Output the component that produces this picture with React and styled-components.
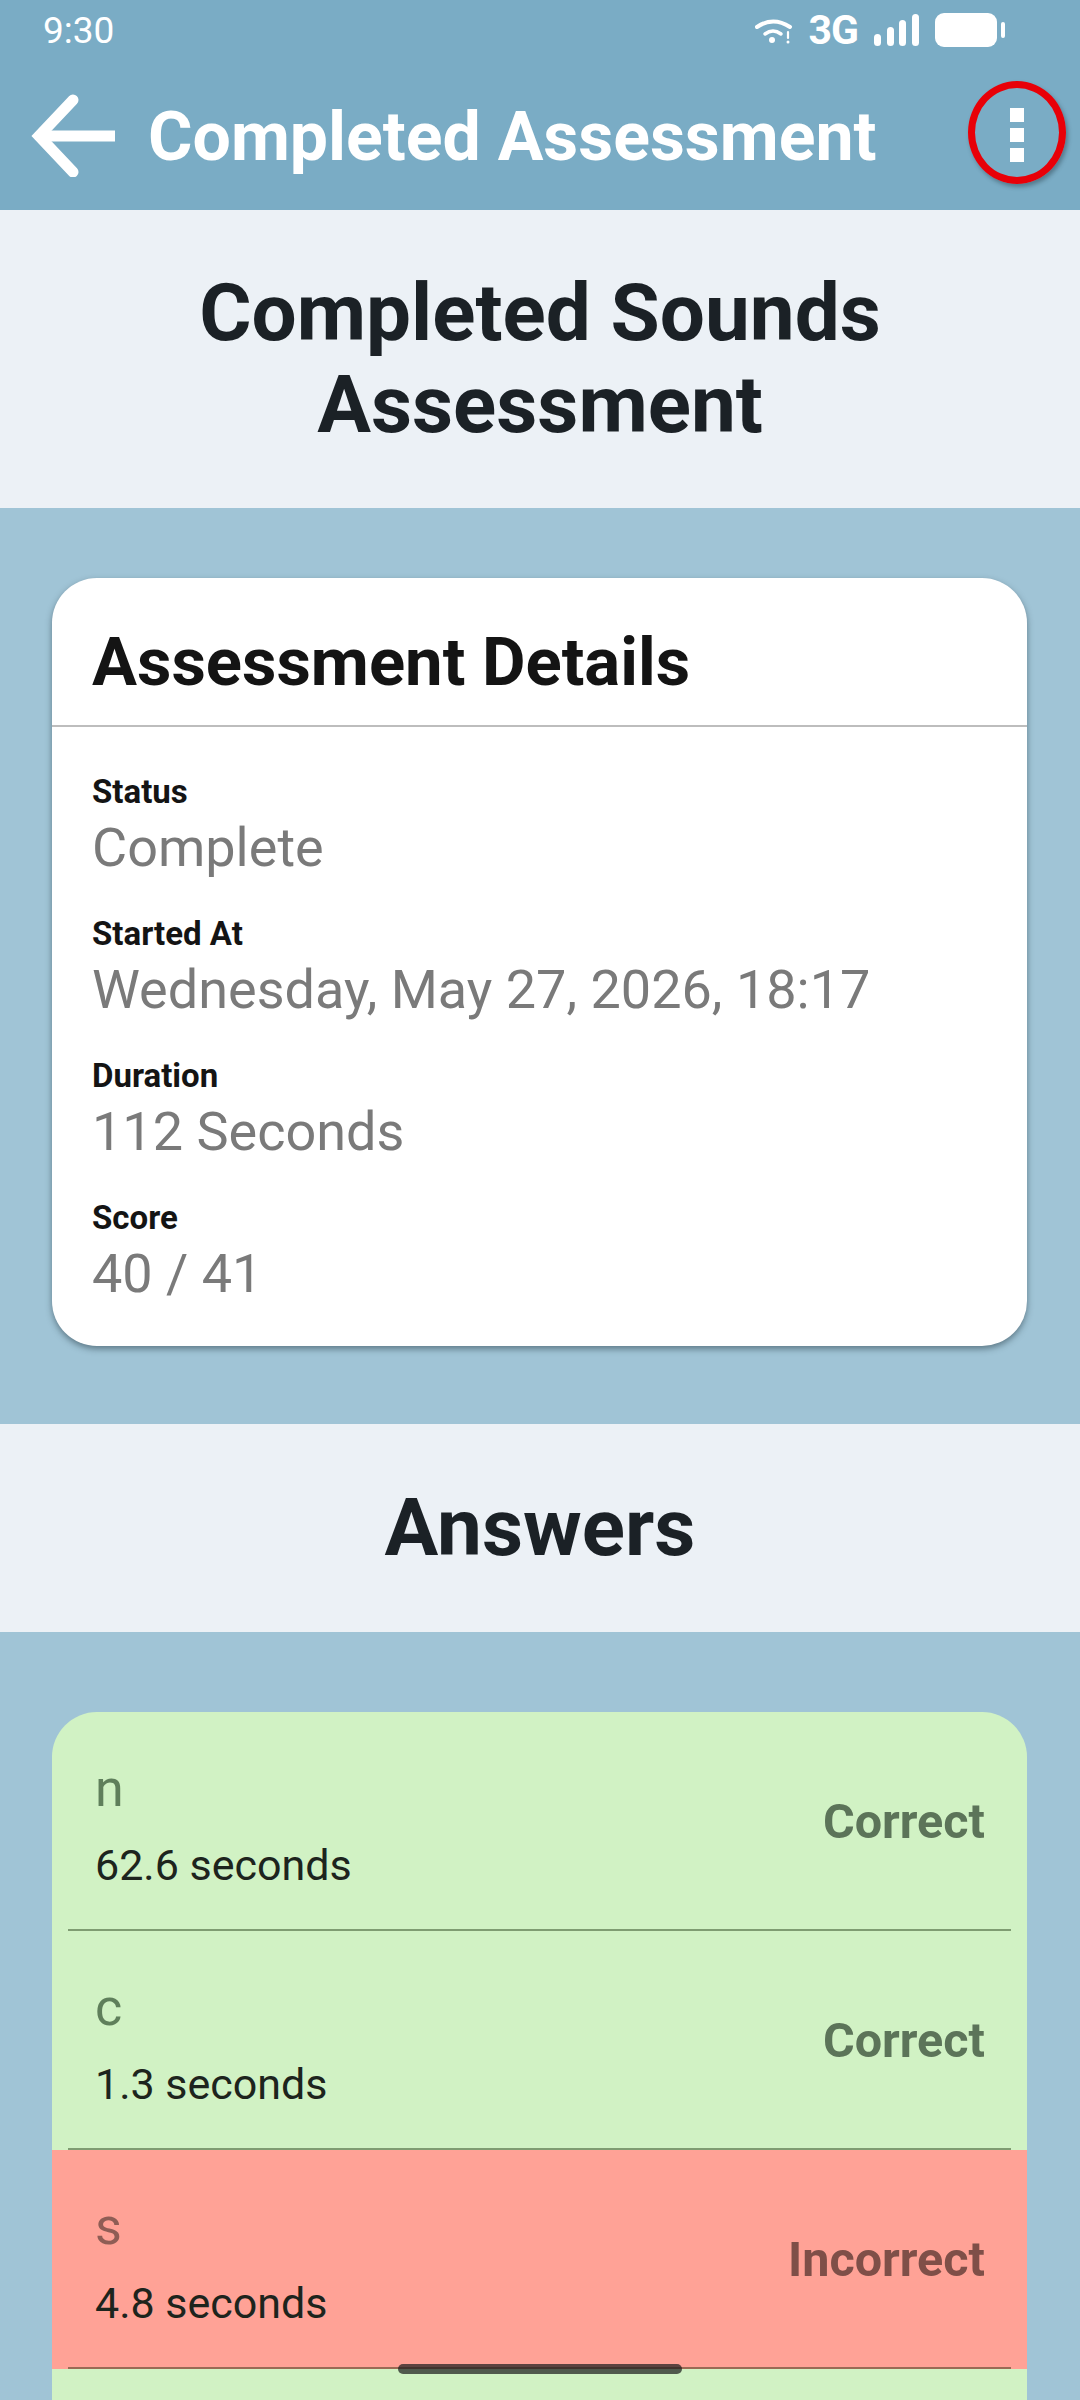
import React from 'react';
import styled, { createGlobalStyle } from 'styled-components';

const GlobalStyle = createGlobalStyle`
  html, body {
    margin: 0;
    padding: 0;
    background: #a0c4d6;
  }
  * {
    box-sizing: border-box;
  }
`;

const Page = styled.div`
  position: relative;
  width: 1080px;
  height: 2400px;
  overflow: hidden;
  display: flex;
  flex-direction: column;
  background: #a0c4d6;
  font-family: Roboto, "Liberation Sans", sans-serif;
`;

const Header = styled.header`
  position: relative;
  height: 210px;
  flex-shrink: 0;
  background: #7aacc5;
  color: #fff;
`;

const StatusBar = styled.div`
  height: 60px;
  padding: 0 75px 0 43px;
  display: flex;
  align-items: center;
  justify-content: space-between;
`;

const Clock = styled.span`
  font-size: 37px;
  font-weight: 400;
`;

const StatusIcons = styled.div`
  display: flex;
  align-items: center;
  gap: 16px;
`;

const Network = styled.span`
  font-size: 41px;
  font-weight: 700;
  line-height: 1;
  letter-spacing: -1px;
`;

const AppBar = styled.div`
  height: 150px;
  padding: 0 56px 0 31px;
  display: flex;
  align-items: center;
`;

const Title = styled.h1`
  margin: 4px 0 0 33px;
  flex: 1;
  font-size: 68px;
  font-weight: 700;
  line-height: 1;
  white-space: nowrap;
`;

const Kebab = styled.div`
  width: 14px;
  display: flex;
  flex-direction: column;
  gap: 6px;

  span {
    height: 14px;
    background: #fff;
  }
`;

const Highlight = styled.div`
  position: absolute;
  left: 968px;
  top: 81px;
  width: 98px;
  height: 103px;
  border: 7px solid #e80008;
  border-radius: 50%;
  box-shadow: 2px 3px 4px rgba(40, 60, 70, 0.45);
`;

const Banner = styled.section`
  height: ${p => p.$height}px;
  flex-shrink: 0;
  background: #ecf1f6;
  display: flex;
  align-items: center;
  justify-content: center;
`;

const Heading = styled.h2`
  margin: 0;
  color: #1b2126;
  font-size: 80px;
  font-weight: 700;
  line-height: 92px;
  text-align: center;
`;

const Band = styled.div`
  flex-shrink: 0;
  padding: ${p => p.$top}px 53px ${p => p.$bottom}px 52px;
`;

const Card = styled.div`
  background: #fff;
  border-radius: 45px;
  box-shadow: 0 3px 6px rgba(30, 50, 60, 0.5);
  overflow: hidden;
`;

const CardTitle = styled.h3`
  margin: 0;
  height: 149px;
  padding: 20px 40px 0;
  display: flex;
  align-items: center;
  color: #141414;
  font-size: 67px;
  font-weight: 700;
  border-bottom: 2px solid #bdbdbd;
`;

const Details = styled.div`
  height: 619px;
  padding: 43px 40px 0;
`;

const Detail = styled.div`
  height: 142px;
`;

const Label = styled.div`
  height: 44px;
  color: #141414;
  font-size: 33px;
  font-weight: 700;
  line-height: 44px;
`;

const Value = styled.div`
  color: #7a7a7a;
  font-size: 54px;
  font-weight: 400;
  line-height: 68px;
`;

const AnswerCard = styled.div`
  border-radius: 45px 45px 0 0;
  overflow: hidden;
`;

const Row = styled.div`
  height: ${p => p.$height}px;
  background: ${p => (p.$wrong ? '#ffa296' : '#d1f2c4')};
  display: flex;
  flex-direction: column;
`;

const RowBody = styled.div`
  flex: 1;
  padding: 0 42px 0 43px;
  display: flex;
  align-items: center;
  justify-content: space-between;
`;

const RowText = styled.div`
  padding-top: 8px;
`;

const Sound = styled.div`
  color: ${p => (p.$wrong ? '#8f5d55' : '#5f7f5b')};
  font-size: 52px;
  line-height: 56px;
  margin-bottom: 24px;
`;

const Time = styled.div`
  color: #1d241d;
  font-size: 43px;
  line-height: 48px;
`;

const Verdict = styled.div`
  padding-top: 2px;
  color: ${p => (p.$wrong ? '#7f4f48' : '#5c7459')};
  font-size: 48.5px;
  font-weight: 700;
`;

const Divider = styled.div`
  height: 2px;
  margin: 0 16px;
  background: ${p => (p.$wrong ? '#9a6a55' : '#7f9c72')};
`;

const HomeBar = styled.div`
  position: absolute;
  left: 398px;
  top: 2364px;
  width: 284px;
  height: 10px;
  border-radius: 5px;
  background: rgba(30, 30, 30, 0.72);
`;

const details = [
  ['Status', 'Complete'],
  ['Started At', 'Wednesday, May 27, 2026, 18:17'],
  ['Duration', '112 Seconds'],
  ['Score', '40 / 41'],
];

const answers = [
  { sound: 'n', time: '62.6 seconds' },
  { sound: 'c', time: '1.3 seconds' },
  { sound: 's', time: '4.8 seconds', wrong: true },
];

const WifiIcon = () => (
  <svg width="38" height="28" viewBox="0 0 38 28" fill="none" stroke="#fff" strokeLinecap="round">
    <path d="M2 11 Q18 0 35 11" strokeWidth="4" />
    <path d="M10 18 Q18 12 26 18" strokeWidth="3.5" />
    <circle cx="17" cy="24" r="3" fill="#fff" stroke="none" />
    <path d="M33 16 V22" strokeWidth="2.2" />
    <circle cx="33" cy="26" r="1.5" fill="#fff" stroke="none" />
  </svg>
);

const SignalIcon = () => (
  <svg width="45" height="32" viewBox="0 0 45 32" fill="#fff">
    <rect x="0" y="20" width="7" height="12" rx="3.5" />
    <rect x="13" y="13" width="7" height="19" rx="3.5" />
    <rect x="25" y="6" width="7" height="26" rx="3.5" />
    <rect x="38" y="0" width="7" height="32" rx="3.5" />
  </svg>
);

const BatteryIcon = () => (
  <svg width="70" height="34" viewBox="0 0 70 34" fill="#fff">
    <rect x="0" y="0" width="62" height="34" rx="9" />
    <rect x="66" y="9" width="4" height="16" rx="2" />
  </svg>
);

const BackArrow = () => (
  <svg width="84" height="84" viewBox="0 0 84 84" fill="none" stroke="#fff" strokeWidth="11">
    <path d="M8 43 H84" />
    <path d="M42 7 L8 43 L42 79" strokeLinecap="round" />
  </svg>
);

export default function App() {
  return (
    <Page>
      <GlobalStyle />
      <Header>
        <StatusBar>
          <Clock>9:30</Clock>
          <StatusIcons>
            <WifiIcon />
            <Network>3G</Network>
            <SignalIcon />
            <BatteryIcon />
          </StatusIcons>
        </StatusBar>
        <AppBar>
          <BackArrow />
          <Title>Completed Assessment</Title>
          <Kebab>
            <span />
            <span />
            <span />
          </Kebab>
        </AppBar>
        <Highlight />
      </Header>
      <Banner $height={298}>
        <Heading>
          Completed Sounds
          <br />
          Assessment
        </Heading>
      </Banner>
      <Band $top={70} $bottom={78}>
        <Card>
          <CardTitle>Assessment Details</CardTitle>
          <Details>
            {details.map(([label, value]) => (
              <Detail key={label}>
                <Label>{label}</Label>
                <Value>{value}</Value>
              </Detail>
            ))}
          </Details>
        </Card>
      </Band>
      <Banner $height={208}>
        <Heading>Answers</Heading>
      </Banner>
      <Band $top={80} $bottom={0}>
        <AnswerCard>
          {answers.map(a => (
            <Row key={a.sound} $height={219} $wrong={a.wrong}>
              <RowBody>
                <RowText>
                  <Sound $wrong={a.wrong}>{a.sound}</Sound>
                  <Time>{a.time}</Time>
                </RowText>
                <Verdict $wrong={a.wrong}>{a.wrong ? 'Incorrect' : 'Correct'}</Verdict>
              </RowBody>
              <Divider $wrong={a.wrong} />
            </Row>
          ))}
          <Row $height={219} />
        </AnswerCard>
      </Band>
      <HomeBar />
    </Page>
  );
}
